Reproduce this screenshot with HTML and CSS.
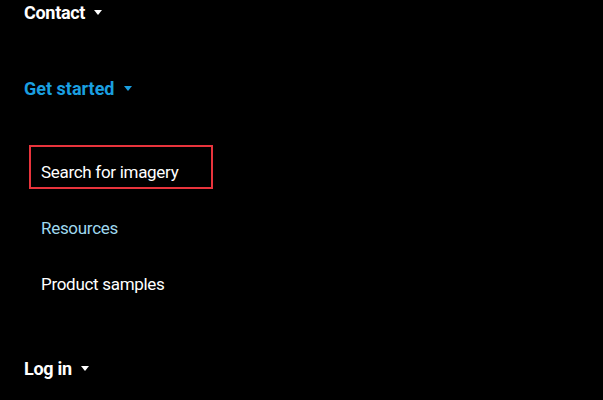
FILE: index.html
```html
<!DOCTYPE html>
<html>
<head>
<meta charset="utf-8">
<link rel="stylesheet" href="styles.css">
</head>
<body>
<nav class="menu">
  <div class="top-item contact"><span>Contact</span><span class="caret"></span></div>
  <div class="top-item started"><span>Get started</span><span class="caret"></span></div>
  <ul class="sub">
    <li class="sub-item focused">Search for imagery</li>
    <li class="sub-item link">Resources</li>
    <li class="sub-item">Product samples</li>
  </ul>
  <div class="top-item login"><span>Log in</span><span class="caret"></span></div>
</nav>
</body>
</html>
```
FILE: styles.css
```css
html, body {
  margin: 0;
  padding: 0;
  background: #000;
  width: 603px;
  height: 400px;
  overflow: hidden;
}
.menu {
  font-family: Roboto, "DejaVu Sans Condensed", sans-serif;
  color: #fff;
  padding-left: 24px;
  display: flex;
  flex-direction: column;
}
.top-item {
  display: flex;
  align-items: center;
  gap: 9px;
  font-weight: 700;
  font-size: 18px;
  height: 24px;
  letter-spacing: -0.3px;
}
.started { margin-top: 52px; color: #1a9fe0; letter-spacing: 0; }
.caret {
  width: 0;
  height: 0;
  border-left: 4px solid transparent;
  border-right: 4px solid transparent;
  border-top: 5px solid currentColor;
  margin-top: 1px;
}
.sub {
  list-style: none;
  margin: 45px 0 0 5px;
  padding: 0;
  display: flex;
  flex-direction: column;
}
.sub-item {
  font-size: 17px;
  height: 56px;
  width: 184px;
  box-sizing: border-box;
  padding-left: 10px;
  display: flex;
  align-items: center;
  border: 2px solid transparent;
  border-width: 0 2px;
  letter-spacing: -0.3px;
}
.sub-item.focused {
  border: 2px solid #e8343c;
  padding-top: 10px;
  height: 44px;
  margin-bottom: 11px;
}
.sub-item.link { color: #9fd8ee; }
.login { margin-top: 44px; }
```
